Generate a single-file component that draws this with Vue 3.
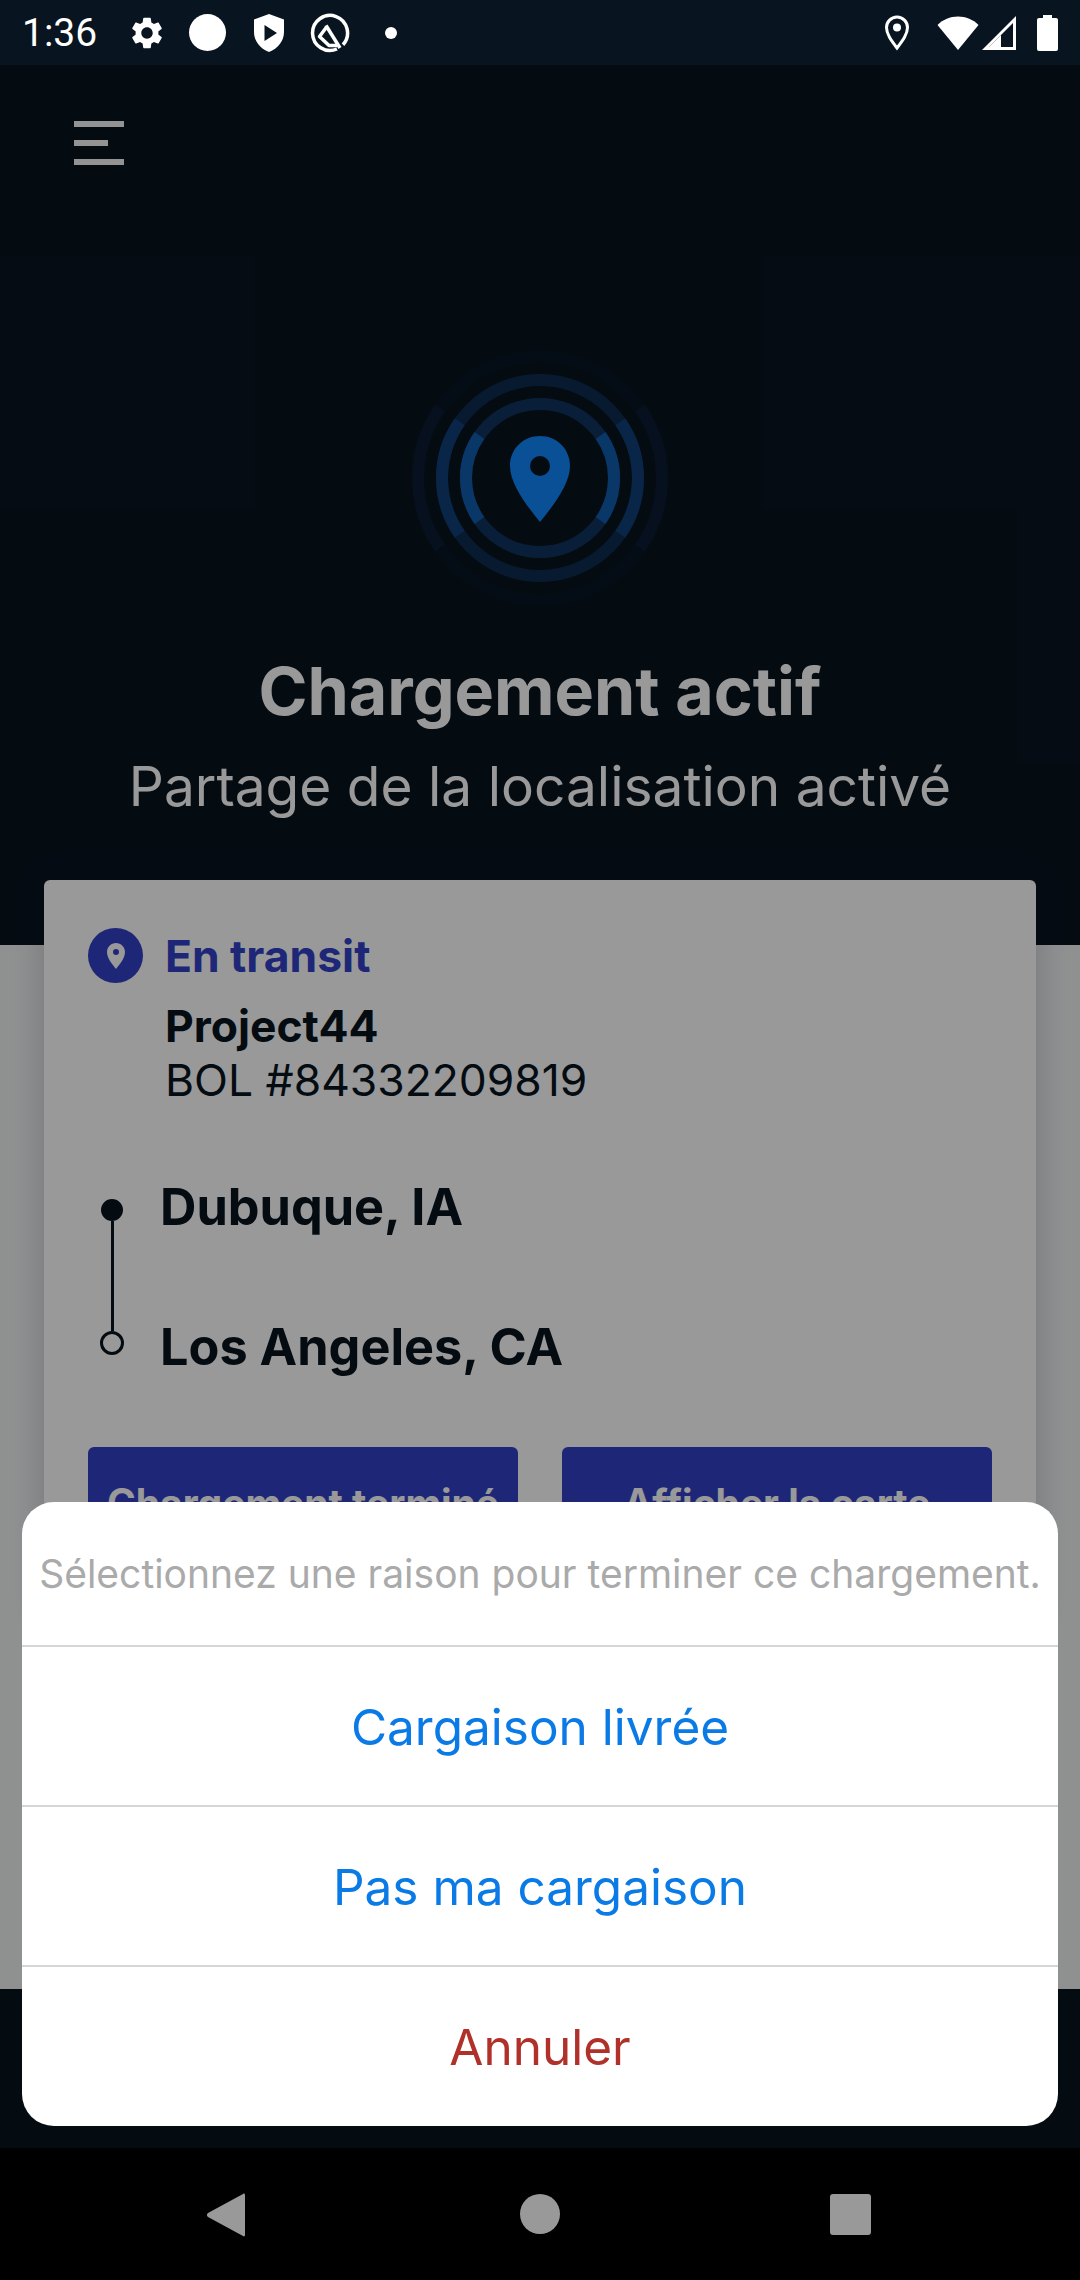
<template>
	<div class="page">
		<div class="status">
			<span class="status__time">1:36</span>
			<div class="status__cell">
				<svg width="38" height="38" viewBox="0 0 24 24" fill="#fff">
					<path d="M19.14 12.94c.04-.3.06-.61.06-.94 0-.32-.02-.64-.07-.94l2.03-1.58c.18-.14.23-.41.12-.61l-1.92-3.32c-.12-.22-.37-.29-.59-.22l-2.39.96c-.5-.38-1.03-.7-1.62-.94l-.36-2.54c-.04-.24-.24-.41-.48-.41h-3.84c-.24 0-.43.17-.47.41l-.36 2.54c-.59.24-1.13.57-1.62.94l-2.39-.96c-.22-.08-.47 0-.59.22L2.74 8.87c-.12.21-.08.47.12.61l2.03 1.58c-.05.3-.09.63-.09.94s.02.64.07.94l-2.03 1.58c-.18.14-.23.41-.12.61l1.92 3.32c.12.22.37.29.59.22l2.39-.96c.5.38 1.03.7 1.62.94l.36 2.54c.05.24.24.41.48.41h3.84c.24 0 .44-.17.47-.41l.36-2.54c.59-.24 1.13-.56 1.62-.94l2.39.96c.22.08.47 0 .59-.22l1.92-3.32c.12-.22.07-.47-.12-.61l-2.01-1.58zM12 15.6c-1.98 0-3.6-1.62-3.6-3.6s1.62-3.6 3.6-3.6 3.6 1.62 3.6 3.6-1.62 3.6-3.6 3.6z" />
				</svg>
			</div>
			<div class="status__cell"><span class="status__disc"></span></div>
			<div class="status__cell">
				<svg width="32" height="38" viewBox="0 0 32 38">
					<path fill="#fff" fill-rule="evenodd" d="M16 0 L31 5.500 V18 C31 27 25 34.500 16 38 C7 34.500 1 27 1 18 V5.500 Z M11.500 11 V27 L24 19 Z" />
				</svg>
			</div>
			<div class="status__cell">
				<svg width="40" height="40" viewBox="0 0 40 40" fill="none" stroke="#fff">
					<path stroke-width="3.500" d="M27 36 A17.500 17.500 0 1 1 33 31.700" />
					<path stroke-width="3.500" stroke-linejoin="round" d="M17 13.500 L9.500 23.500 L19 32.500 H27" />
					<path stroke-width="3.500" d="M16 12.500 L30 35" />
				</svg>
			</div>
			<div class="status__cell"><span class="status__dot"></span></div>
			<div class="status__right">
				<svg width="26" height="36" viewBox="0 0 26 36" fill="none">
					<path stroke="#fff" stroke-width="3" d="M13 33 C7 25 2.500 19 2.500 12.500 A10.500 10.500 0 0 1 23.500 12.500 C23.500 19 19 25 13 33 Z" />
					<circle cx="13" cy="12.500" r="4" fill="#fff" />
				</svg>
				<svg class="status__wifi" width="42" height="34" viewBox="0 0 42 34">
					<path fill="#fff" d="M21 34 L0.500 9 C6 3.500 13 0.500 21 0.500 C29 0.500 36 3.500 41.500 9 Z" />
				</svg>
				<svg class="status__signal" width="35" height="34" viewBox="0 0 35 34" fill="#fff">
					<path fill-rule="evenodd" d="M34 0 V34 H0 Z M31 31 V7 L7 31 Z" />
					<path d="M7 31 L19 19 V31 Z" />
				</svg>
				<svg class="status__battery" width="21" height="36" viewBox="0 0 21 36">
					<path fill="#fff" d="M6 0 H15 V3 H19 A2 2 0 0 1 21 5 V34 A2 2 0 0 1 19 36 H2 A2 2 0 0 1 0 34 V5 A2 2 0 0 1 2 3 H6 Z" />
				</svg>
			</div>
		</div>

		<div class="main">
			<div class="hero">
				<div class="menu">
					<span class="menu__bar"></span>
					<span class="menu__bar menu__bar--short"></span>
					<span class="menu__bar"></span>
				</div>
				<svg class="radar" width="260" height="260" viewBox="0 0 260 260" fill="none">
					<circle v-for="ring in rings" :key="ring.r" cx="130" cy="130" :r="ring.r" stroke-width="12" :stroke="ring.base" />
					<g v-for="ring in rings" :key="'side' + ring.r" stroke-width="12" :stroke="ring.side">
						<path :d="sideArc(ring.r, 1)" />
						<path :d="sideArc(ring.r, -1)" />
					</g>
					<path fill="#0f86fa" fill-rule="evenodd" d="M130 88 C147 88 160 101 160 118 C160 136 143 158 130 174 C117 158 100 136 100 118 C100 101 113 88 130 88 Z M130 108 A10 10 0 1 0 130 128 A10 10 0 1 0 130 108 Z" />
				</svg>
				<h1 class="hero__title">Chargement actif</h1>
				<p class="hero__sub">Partage de la localisation activé</p>
			</div>

			<div class="body">
				<div class="card">
					<div class="card__status">
						<span class="card__badge">
							<svg width="20" height="28" viewBox="0 0 20 28">
								<path fill="#ffffff" fill-rule="evenodd" d="M10 1 C15 1 19 5 19 10 C19 16 14 22 10 27 C6 22 1 16 1 10 C1 5 5 1 10 1 Z M10 7 A3 3 0 1 0 10 13 A3 3 0 1 0 10 7 Z" />
							</svg>
						</span>
						<span class="card__state">En transit</span>
					</div>
					<div class="card__company">Project44</div>
					<div class="card__bol">BOL #84332209819</div>

					<div class="route">
						<div class="route__line">
							<span class="route__dot"></span>
							<span class="route__stem"></span>
							<span class="route__dot route__dot--end"></span>
						</div>
						<div class="route__stops">
							<span>Dubuque, IA</span>
							<span>Los Angeles, CA</span>
						</div>
					</div>

					<div class="actions">
						<button class="actions__btn">Chargement terminé</button>
						<button class="actions__btn">Afficher la carte</button>
					</div>
				</div>
			</div>

			<div class="foot"></div>

			<div class="overlay">
				<div class="sheet">
					<div class="sheet__title">Sélectionnez une raison pour terminer ce chargement.</div>
					<div class="sheet__row">Cargaison livrée</div>
					<div class="sheet__row">Pas ma cargaison</div>
					<div class="sheet__row sheet__row--cancel">Annuler</div>
				</div>
			</div>
		</div>

		<div class="nav">
			<svg width="40" height="44" viewBox="0 0 40 44">
				<path fill="#999" d="M37 1 C38 0 39 1 39 2 V42 C39 43 38 44 37 43 L2 24 C0.500 23 0.500 21 2 20 Z" />
			</svg>
			<span class="nav__home"></span>
			<span class="nav__recent"></span>
		</div>
	</div>
</template>

<script setup>
const rings = [
	{ r: 122, base: "#081626", side: "#0a1c32" },
	{ r: 98, base: "#0c2c50", side: "#0f4078" },
	{ r: 74, base: "#0f355f", side: "#105cae" },
];

// arc on the left or right side of a ring, 35deg either way from horizontal
function sideArc(r, dir) {
	const a = (35 * Math.PI) / 180;
	const dx = r * Math.cos(a) * dir;
	const dy = r * Math.sin(a);
	const sweep = dir > 0 ? 1 : 0;
	return `M${130 + dx} ${130 - dy} A${r} ${r} 0 0 ${sweep} ${130 + dx} ${130 + dy}`;
}
</script>

<style>
html,
body {
	margin: 0;
	background: #000;
}
</style>

<style scoped>
.page {
	display: flex;
	flex-direction: column;
	width: 1080px;
	height: 2280px;
	overflow: hidden;
	font-family: Inter, "Liberation Sans", sans-serif;
	background: #000;
}

.status {
	display: flex;
	align-items: center;
	flex: 0 0 65px;
	padding: 0 22px;
	background: #08141f;
	box-sizing: border-box;
}

.status__time {
	width: 94px;
	color: #fff;
	font-family: Roboto, sans-serif;
	font-size: 39px;
}

.status__cell {
	display: flex;
	align-items: center;
	justify-content: center;
	width: 61px;
	height: 40px;
}

.status__disc {
	width: 37px;
	height: 37px;
	border-radius: 50%;
	background: #fff;
}

.status__dot {
	width: 12px;
	height: 12px;
	border-radius: 50%;
	background: #fff;
}

.status__right {
	display: flex;
	align-items: center;
	margin-left: auto;
}

.status__wifi {
	margin-left: 27px;
}

.status__signal {
	margin-left: 3px;
}

.status__battery {
	margin-left: 20px;
}

.main {
	position: relative;
	display: flex;
	flex-direction: column;
	flex: 1;
	min-height: 0;
}

.hero {
	display: flex;
	flex-direction: column;
	align-items: center;
	flex: 0 0 880px;
	background: #08141f;
	box-sizing: border-box;
}

.menu {
	display: flex;
	flex-direction: column;
	align-self: flex-start;
	gap: 13px;
	margin: 56px 0 0 74px;
}

.menu__bar {
	width: 50px;
	height: 6px;
	background: #f5f5f7;
}

.menu__bar--short {
	width: 34px;
}

.radar {
	margin-top: 183px;
}

.hero__title {
	margin: 47px 0 0;
	color: #fff;
	font-size: 66.300px;
	font-weight: 700;
	line-height: 72px;
}

.hero__sub {
	margin: 27px 0 0;
	color: #fff;
	font-size: 55px;
	font-weight: 400;
	line-height: 64px;
}

.body {
	flex: 1;
	min-height: 0;
	padding: 0 44px;
	background: #eef0f1;
}

.card {
	margin-top: -65px;
	padding: 48px 44px 60px;
	border-radius: 6px;
	background: #fff;
	box-shadow: 0 0 30px rgba(8, 20, 31, 0.2);
}

.card__status {
	display: flex;
	align-items: center;
	gap: 22px;
}

.card__badge {
	display: flex;
	align-items: center;
	justify-content: center;
	width: 55px;
	height: 55px;
	border-radius: 50%;
	background: #3341c6;
}

.card__state {
	color: #3341c6;
	font-size: 44.400px;
	font-weight: 700;
}

.card__company,
.card__bol {
	margin-left: 77px;
	color: #08141f;
	font-size: 44.400px;
	line-height: 54px;
}

.card__company {
	margin-top: 16px;
	font-weight: 700;
}

.route {
	display: flex;
	margin-top: 70px;
}

.route__line {
	display: flex;
	flex-direction: column;
	align-items: center;
	width: 24px;
	margin-left: 12px;
	padding-top: 22px;
}

.route__dot {
	flex: none;
	width: 22px;
	height: 22px;
	border: 2px solid #08141f;
	border-radius: 50%;
	background: #08141f;
	box-sizing: border-box;
}

.route__dot--end {
	width: 24px;
	height: 24px;
	border-width: 3px;
	background: transparent;
}

.route__stem {
	width: 3px;
	height: 110px;
	background: #08141f;
}

.route__stops {
	display: flex;
	flex-direction: column;
	gap: 80px;
	margin-left: 36px;
	color: #08141f;
	font-size: 50.400px;
	font-weight: 700;
	line-height: 60px;
}

.actions {
	display: flex;
	gap: 44px;
	margin-top: 70px;
}

.actions__btn {
	flex: 1;
	height: 110px;
	padding: 0;
	border: 0;
	border-radius: 6px;
	background: #3341c6;
	color: #fff;
	font-family: inherit;
	font-size: 39px;
	font-weight: 700;
}

.foot {
	flex: 0 0 159px;
	background: #08141f;
}

.overlay {
	position: absolute;
	inset: 0;
	background: rgba(0, 0, 0, 0.4);
}

.sheet {
	position: absolute;
	right: 22px;
	bottom: 22px;
	left: 22px;
	overflow: hidden;
	border-radius: 32px;
	background: #fff;
}

.sheet__title {
	display: flex;
	align-items: center;
	justify-content: center;
	height: 143px;
	color: #aaaaaa;
	font-size: 39px;
	white-space: nowrap;
}

.sheet__row {
	height: 158px;
	border-top: 2px solid #d6d6d8;
	color: #0a7ae6;
	font-size: 49.500px;
	line-height: 161px;
	text-align: center;
}

.sheet__row--cancel {
	height: 159px;
	color: #b0302a;
}

.nav {
	position: relative;
	flex: 0 0 132px;
	background: #000;
}

.nav svg {
	position: absolute;
	left: 206px;
	top: 45px;
}

.nav__home {
	position: absolute;
	left: 520px;
	top: 46px;
	width: 40px;
	height: 40px;
	border-radius: 50%;
	background: #999;
}

.nav__recent {
	position: absolute;
	left: 830px;
	top: 46px;
	width: 41px;
	height: 41px;
	border-radius: 3px;
	background: #999;
}
</style>
